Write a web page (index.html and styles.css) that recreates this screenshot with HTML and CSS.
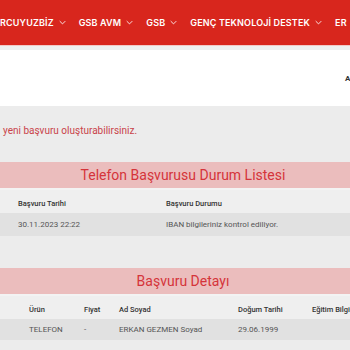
FILE: index.html
```html
<!DOCTYPE html>
<html lang="tr">
<head>
<meta charset="utf-8">
<link rel="stylesheet" href="styles.css">
</head>
<body>
<nav class="topnav">
  <span class="nav-item">RCUYUZBİZ <svg class="chev" viewBox="0 0 10 6"><path d="M1 1l4 4 4-4"/></svg></span>
  <span class="nav-item">GSB AVM <svg class="chev" viewBox="0 0 10 6"><path d="M1 1l4 4 4-4"/></svg></span>
  <span class="nav-item">GSB <svg class="chev" viewBox="0 0 10 6"><path d="M1 1l4 4 4-4"/></svg></span>
  <span class="nav-item">GENÇ TEKNOLOJİ DESTEK <svg class="chev" viewBox="0 0 10 6"><path d="M1 1l4 4 4-4"/></svg></span>
  <span class="nav-item">ER</span>
</nav>
<div class="strip"></div>
<header class="subhead">
  <span class="subhead-link">A</span>
</header>
<main class="content">
  <p class="notice">yeni başvuru oluşturabilirsiniz.</p>

  <section class="panel">
    <h2 class="band">Telefon Başvurusu Durum Listesi</h2>
    <div class="grid grid-status head">
      <span>Başvuru Tarihi</span><span>Başvuru Durumu</span>
    </div>
    <div class="grid grid-status row">
      <span>30.11.2023 22:22</span><span>IBAN bilgileriniz kontrol ediliyor.</span>
    </div>
  </section>

  <section class="panel panel-2">
    <h2 class="band">Başvuru Detayı</h2>
    <div class="grid grid-detail head">
      <span>Ürün</span><span>Fiyat</span><span>Ad Soyad</span><span>Doğum Tarihi</span><span>Eğitim Bilgisi</span>
    </div>
    <div class="grid grid-detail row row-2">
      <span>TELEFON</span><span>-</span><span>ERKAN GEZMEN Soyad</span><span>29.06.1999</span><span></span>
    </div>
  </section>
</main>
</body>
</html>
```
FILE: styles.css
```css
html, body {
  margin: 0;
  padding: 0;
  background: #ececec;
  overflow: hidden;
}
body {
  width: 350px;
  font-family: Roboto, "Liberation Sans", sans-serif;
}
.topnav {
  height: 45px;
  background: #d8261d;
  display: flex;
  align-items: center;
  white-space: nowrap;
  font-family: Inter, "Liberation Sans", sans-serif;
  font-weight: 600;
  font-size: 9px;
  letter-spacing: 0.15px;
  color: #fff;
  gap: 13px;
  overflow: hidden;
}
.nav-item {
  display: inline-flex;
  align-items: center;
  gap: 5px;
  flex: none;
}
.chev {
  width: 7px;
  height: 5px;
  fill: none;
  stroke: #fff;
  stroke-width: 1.2;
}
.strip {
  height: 5px;
  background: #eef0f0;
  border-top: 1px solid #f2c9c6;
  box-sizing: border-box;
}
.subhead {
  height: 56px;
  background: #fff;
  display: flex;
  align-items: center;
  justify-content: flex-end;
  overflow: hidden;
}
.subhead-link {
  font-size: 8px;
  font-weight: 700;
  color: #333;
  margin-right: -3px;
  width: 8px;
}
.content {
  padding-top: 1px;
}
.notice {
  margin: 18px 0 0 3px;
  font-size: 10px;
  color: #c9434a;
  height: 24px;
  line-height: 12px;
}
.panel {
  margin-top: 13px;
}
.panel-2 {
  margin-top: 32px;
}
.band {
  margin: 0;
  height: 26px;
  background: #ebbdbd;
  color: #d5343a;
  font-weight: 400;
  font-size: 14px;
  line-height: 27px;
  text-align: center;
  padding-left: 16px;
  border-bottom: 2px solid #f3f3f3;
}
.grid {
  display: grid;
  align-items: center;
  font-size: 7.5px;
  white-space: nowrap;
}
.grid.head {
  height: 23px;
  padding-top: 4px;
  box-sizing: border-box;
  background: #efefef;
  color: #333;
  font-weight: 500;
}
.grid.row {
  height: 23px;
  background: #e1e1e1;
  color: #555;
  font-size: 8px;
}
.grid.row-2 {
  height: 21px;
}
.grid-status {
  grid-template-columns: 148px 1fr;
  padding-left: 18px;
}
.grid-detail {
  grid-template-columns: 55px 35px 119px 74px 1fr;
  padding-left: 29px;
}
```
